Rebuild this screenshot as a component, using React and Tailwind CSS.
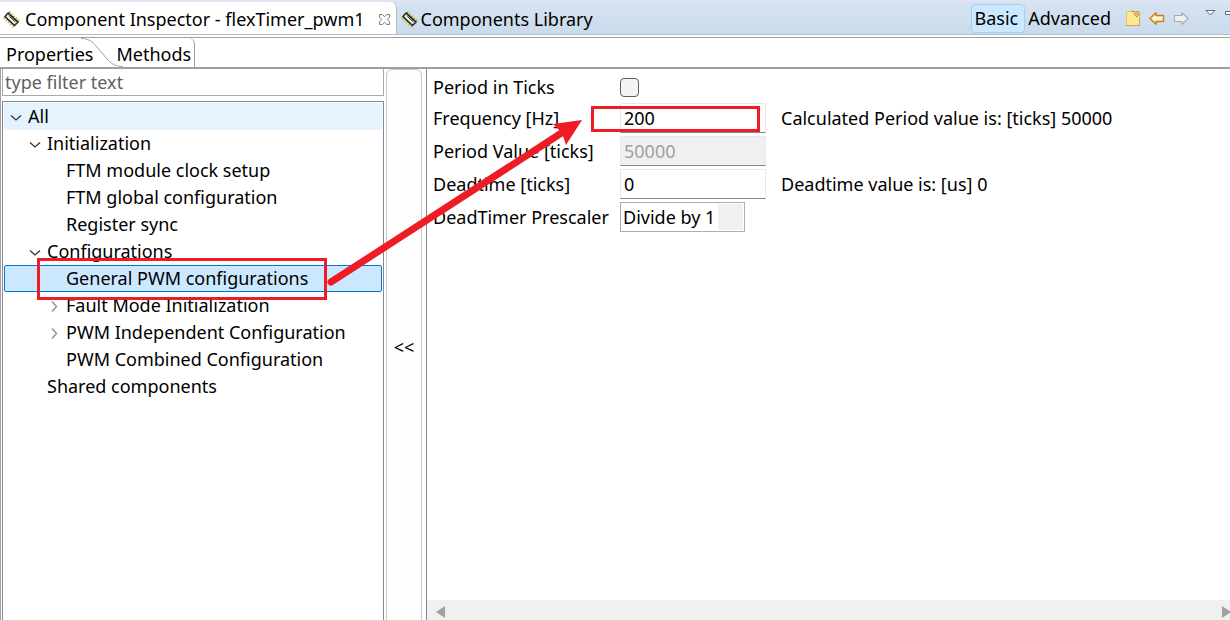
import { useState } from 'react'

const TREE = [
  { label: 'All', level: 0, arrow: 'open' },
  { label: 'Initialization', level: 1, arrow: 'open' },
  { label: 'FTM module clock setup', level: 2 },
  { label: 'FTM global configuration', level: 2 },
  { label: 'Register sync', level: 2 },
  { label: 'Configurations', level: 1, arrow: 'open' },
  { label: 'General PWM configurations', level: 2, marked: true },
  { label: 'Fault Mode Initialization', level: 2, arrow: 'closed' },
  { label: 'PWM Independent Configuration', level: 2, arrow: 'closed' },
  { label: 'PWM Combined Configuration', level: 2 },
  { label: 'Shared components', level: 1 },
]

const INDENT = ['pl-[3px]', 'pl-[22px]', 'pl-[41px]']

function ChipIcon() {
  return (
    <svg width="17" height="17" viewBox="0 0 17 17" className="shrink-0" aria-hidden="true">
      <path d="M6 1L16 10.500" stroke="#b3a512" strokeWidth="2.500" strokeDasharray="1.500 1.500" />
      <path d="M1 6.500L11 16" stroke="#c9bb1e" strokeWidth="2.500" strokeDasharray="1.500 1.500" />
      <path d="M5 1.500L1.500 5.500L11.500 15L15.500 11Z" fill="#2a2a2a" stroke="#1c1c1c" />
      <path d="M5 3L3 5.500L11.500 13.500L14 11.300Z" fill="#c9c9d2" />
      <path d="M4 5L11.500 12" stroke="#fff" strokeWidth="1.500" />
      <path d="M6.500 5.500L12 10.500" stroke="#333" />
    </svg>
  )
}

function CloseIcon() {
  return (
    <svg width="11" height="11" viewBox="0 0 10 10" fill="none" stroke="#777" strokeWidth="0.900" aria-hidden="true">
      <path d="M.5.5H3L5 2.500L7 .5H9.500V3L7.500 5L9.500 7V9.500H7L5 7.500L3 9.500H.5V7L2.500 5L.5 3Z" />
    </svg>
  )
}

function NewIcon() {
  return (
    <svg width="16" height="17" viewBox="0 0 16 17" aria-hidden="true">
      <path d="M1.500 1.500H14.500V15.500H1.500Z" fill="#fbe98f" stroke="#e3c76a" />
      <path d="M1 15.500H15M14.500 7V16" stroke="#c9a95c" />
      <path d="M12 1L15 4L12 7L9 4Z" fill="#fff3b8" stroke="#c99a3c" />
      <path d="M12 1V7M9 4H15" stroke="#c99a3c" />
      <path d="M7 2L9 1" stroke="#d0504a" />
    </svg>
  )
}

function ArrowIcon({ forward }) {
  return (
    <svg width="16" height="13" viewBox="0 0 16 13" strokeLinejoin="round" aria-hidden="true">
      {forward ? (
        <path d="M15 6.500L9 .7V3.500H1.500V9.500H9V12.300Z" fill="#f1f1f1" stroke="#a9adb3" strokeWidth="1.200" />
      ) : (
        <path d="M1 6.500L7 .7V3.500H14.500V9.500H7V12.300Z" fill="#fff4d0" stroke="#c08416" strokeWidth="1.400" />
      )}
    </svg>
  )
}

function Twisty({ state }) {
  if (!state) return <span className="w-4 shrink-0" />
  return (
    <svg width="16" height="16" viewBox="0 0 16 16" fill="none" className="shrink-0" aria-hidden="true">
      {state === 'open' ? (
        <path d="M3 6.500L8 11L13 6.500" stroke="#333" strokeWidth="1.300" />
      ) : (
        <path d="M6 3.500L10.500 8.500L6 13.500" stroke="#8a8a8a" strokeWidth="1.300" />
      )}
    </svg>
  )
}

function TopBar() {
  return (
    <header className="flex h-[35px] items-stretch border-t-2 border-b border-t-[#dfe3f3] border-b-[#b3bdd0] bg-linear-to-b from-[#d6e2f0] to-[#cbdbec]">
      <div className="flex items-center rounded-tr-md border-r border-[#b3bdd0] bg-white pt-[3px] pr-[6px] pl-[3px]">
        <button type="button" className="flex items-center gap-[5px]">
          <ChipIcon />
          Component Inspector - flexTimer_pwm1
        </button>
        <button type="button" aria-label="Close" className="ml-[14px]">
          <CloseIcon />
        </button>
      </div>
      <button type="button" className="flex items-center gap-[3px] pt-[3px] pl-1">
        <ChipIcon />
        Components Library
      </button>
      <div className="ml-auto flex items-center pt-px">
        <button type="button" className="h-[29px] rounded-sm border border-[#99d1ff] bg-[#cce8ff] pr-[6px] pl-[2px]">
          Basic
        </button>
        <button type="button" className="pl-[3px]">Advanced</button>
        <button type="button" aria-label="New" className="ml-[14px]"><NewIcon /></button>
        <button type="button" aria-label="Back" className="ml-2"><ArrowIcon /></button>
        <button type="button" aria-label="Forward" className="ml-2"><ArrowIcon forward /></button>
        <button type="button" aria-label="View menu" className="mb-3 ml-4">
          <svg width="11" height="6" viewBox="0 0 11 6" aria-hidden="true">
            <path d="M1 .5H10L5.500 5Z" fill="#fff" stroke="#666" />
          </svg>
        </button>
        <button type="button" aria-label="Minimize" className="mb-3 ml-[9px]">
          <svg width="5" height="4" viewBox="0 0 5 4" aria-hidden="true">
            <path d="M6 .5H.5V3.500H6" fill="#fff" stroke="#666" />
          </svg>
        </button>
      </div>
    </header>
  )
}

function PageTabs() {
  return (
    <nav className="mt-[2px] flex h-[32px] shrink-0 items-stretch border-t border-b-2 border-[#a0a0a0]">
      <button type="button" className="pt-[3px] pl-[6px]">Properties</button>
      <svg width="42" height="29" viewBox="0 0 42 29" fill="none" className="-mr-4 -ml-3 shrink-0" aria-hidden="true">
        <path d="M0 .5C7 .5 11 3 15 8L27 22C31 26 35 28.500 42 28.500" stroke="#a0a0a0" />
      </svg>
      <button type="button" className="rounded-tr-md border-r border-[#a0a0a0] pt-[3px] pr-[3px] pl-[9px]">Methods</button>
    </nav>
  )
}

function Tree() {
  const [selected, setSelected] = useState('General PWM configurations')

  return (
    <ul className="mt-[5px] flex-1 border border-b-0 border-[#828790] p-px">
      {TREE.map((item) => (
        <li key={item.label} className={item.label === 'All' ? 'relative bg-[#e5f3ff]' : 'relative'}>
          <button
            type="button"
            onClick={() => setSelected(item.label)}
            className={`flex h-[27px] w-full items-center gap-1 border text-left whitespace-nowrap ${INDENT[item.level]} ${
              selected === item.label ? 'rounded-xs border-[#0078d7] bg-[#cce8ff]' : 'border-transparent'
            }`}
          >
            <Twisty state={item.arrow} />
            {item.label}
          </button>
          {item.marked && (
            <span className="pointer-events-none absolute -top-[7px] left-[33px] z-10 h-[42px] w-[290px] border-3 border-[#ee1c25]" />
          )}
        </li>
      ))}
    </ul>
  )
}

const field =
  'h-[30px] w-full border border-[#e8e8e8] border-b-[#868686] px-[3px] pb-px outline-none disabled:bg-[#f0f0f0] disabled:text-[#a0a0a0]'

function Settings() {
  const [ticks, setTicks] = useState(false)
  const [frequency, setFrequency] = useState('200')
  const [deadtime, setDeadtime] = useState('0')

  return (
    <form className="grid grid-cols-[184px_146px_1fr] items-center gap-[3px] pt-[5px] pl-[6px] leading-[26px] whitespace-nowrap">
      <label htmlFor="ticks">Period in Ticks</label>
      <input
        id="ticks"
        type="checkbox"
        checked={ticks}
        onChange={(e) => setTicks(e.target.checked)}
        className="size-[19px] appearance-none rounded-sm border border-[#5f5f5f] bg-[#f3f3f3] checked:bg-[#0067c0]"
      />
      <span />

      <label htmlFor="frequency">Frequency [Hz]</label>
      <div className="relative">
        <input id="frequency" value={frequency} onChange={(e) => setFrequency(e.target.value)} className={field} />
        <span className="pointer-events-none absolute top-[3px] -left-[29px] h-[26px] w-[169px] border-3 border-[#ee1c25]" />
      </div>
      <output htmlFor="frequency" className="pl-3">Calculated Period value is: [ticks] 50000</output>

      <label htmlFor="period">Period Value [ticks]</label>
      <input id="period" value="50000" disabled className={field} />
      <span />

      <label htmlFor="deadtime">Deadtime [ticks]</label>
      <input id="deadtime" value={deadtime} onChange={(e) => setDeadtime(e.target.value)} className={field} />
      <output htmlFor="deadtime" className="pl-3">Deadtime value is: [us] 0</output>

      <label htmlFor="prescaler">DeadTimer Prescaler</label>
      <div className="relative w-[125px]">
        <select id="prescaler" className="h-[30px] w-full appearance-none border border-[#adadad] bg-white px-[2px] pb-px">
          <option>Divide by 1</option>
          <option>Divide by 4</option>
          <option>Divide by 16</option>
        </select>
        <span className="pointer-events-none absolute inset-y-[2px] right-[2px] w-[25px] bg-[#f0f0f0]" />
      </div>
    </form>
  )
}

export default function App() {
  return (
    <div className="relative flex h-screen flex-col overflow-hidden bg-white font-['Noto_Sans','Open_Sans',sans-serif] text-[18px] leading-[27px] text-black">
      <TopBar />
      <PageTabs />

      <main className="flex min-h-0 flex-1 border-l border-[#a0a0a0]">
        <section className="ml-px flex w-[382px] shrink-0 flex-col">
          <input
            aria-label="Filter"
            placeholder="type filter text"
            className="h-[27px] border border-t-0 border-[#a9a9a9] px-[2px] outline-none placeholder:text-[#5f5f5f]"
          />
          <Tree />
        </section>

        <button type="button" className="mx-[2px] mr-1 w-[36px] shrink-0 rounded-t-md border border-b-0 border-[#c8c8c8] bg-[#fdfdfd] pt-1">
          &lt;&lt;
        </button>

        <section className="flex min-w-0 flex-1 flex-col border-l border-[#828790]">
          <Settings />
          <div className="mt-auto flex h-5 items-center justify-between bg-[#f0f0f0] pt-1 pl-[9px]">
            <button type="button" aria-label="Scroll left">
              <svg width="9" height="12" viewBox="0 0 9 12" className="block" aria-hidden="true">
                <path d="M9 0V12L0 6Z" fill="#a0a0a0" />
              </svg>
            </button>
            <button type="button" aria-label="Scroll right">
              <svg width="8" height="12" viewBox="0 0 8 12" className="block" aria-hidden="true">
                <path d="M0 0V12L9 6Z" fill="#a0a0a0" />
              </svg>
            </button>
          </div>
        </section>
      </main>

      {/* Arrow from the tree entry to the frequency field */}
      <svg width="255" height="168" viewBox="0 0 255 168" className="pointer-events-none absolute top-[119px] left-[327px] z-20" aria-hidden="true">
        <path d="M4 163L236 13" stroke="#ee1c25" strokeWidth="7" strokeLinecap="round" />
        <path d="M255 1L226 5L235 14L239 26Z" fill="#ee1c25" />
      </svg>
    </div>
  )
}
